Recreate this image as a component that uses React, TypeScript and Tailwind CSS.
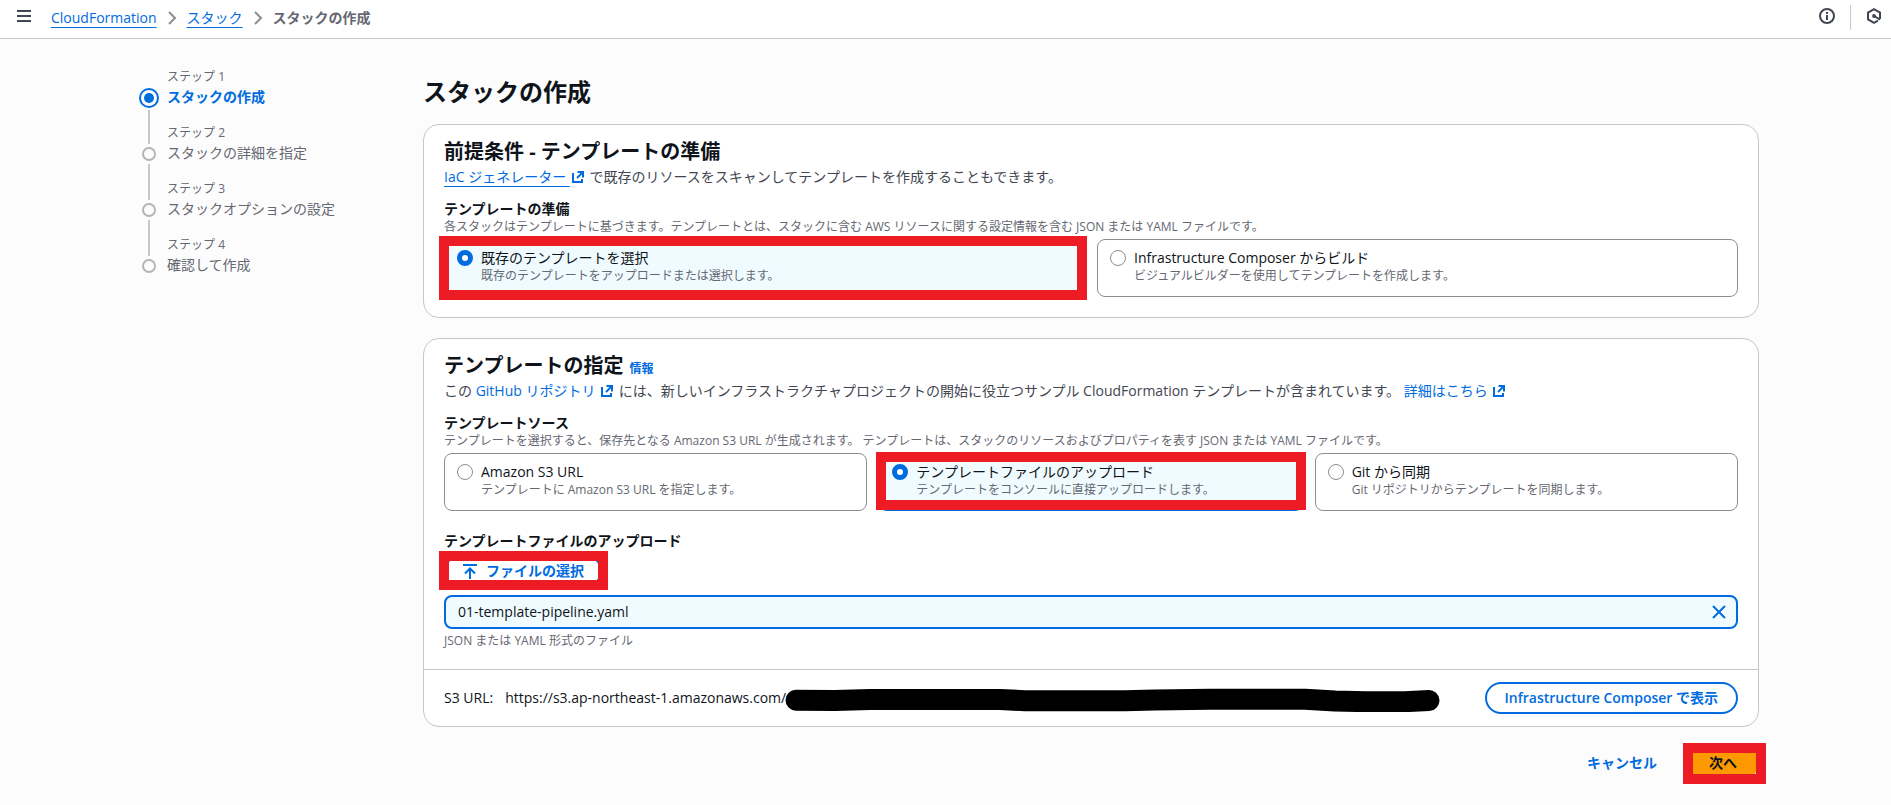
import { useState } from "react";
import type { ReactNode } from "react";

interface TileProps {
  name: string;
  value: string;
  label: string;
  description: string;
  selected: string;
  onSelect: (value: string) => void;
  children?: ReactNode;
}

const steps = [
  "スタックの作成",
  "スタックの詳細を指定",
  "スタックオプションの設定",
  "確認して作成",
];

function MenuIcon() {
  return (
    <svg viewBox="0 0 16 16" className="size-4" fill="none" stroke="currentColor" strokeWidth="2" aria-hidden="true">
      <path d="M1 3h14M1 8h14M1 13h14" />
    </svg>
  );
}

function InfoIcon() {
  return (
    <svg viewBox="0 0 16 16" className="size-4" fill="none" stroke="currentColor" strokeWidth="2" aria-hidden="true">
      <circle cx="8" cy="8" r="7" />
      <path d="M8 7v5M8 4v2" />
    </svg>
  );
}

function AssistantIcon() {
  return (
    <svg viewBox="0 0 16 16" className="size-4" fill="none" stroke="currentColor" strokeWidth="2" aria-hidden="true">
      <path d="M14 11V4.6L8 1.2 2 4.6v6.8l6 3.4 4-2.2" />
      <path d="m8 8 6 3.6" />
      <circle cx="8" cy="8" r="1.2" fill="currentColor" strokeWidth="1.4" />
    </svg>
  );
}

function ExternalIcon() {
  return (
    <svg
      viewBox="0 0 16 16"
      className="inline-block size-4 align-[-3px]"
      fill="none"
      stroke="currentColor"
      strokeWidth="2"
      aria-hidden="true"
    >
      <path d="M7.5 3H13v5.5" />
      <path d="M13 3 7 9" />
      <path d="M3 4v9h9v-3" />
    </svg>
  );
}

function UploadIcon() {
  return (
    <svg viewBox="0 0 16 16" className="size-4" fill="none" stroke="currentColor" strokeWidth="2" aria-hidden="true">
      <path d="M1 2h14" />
      <path d="M8 16V6" />
      <path d="m3 10.5 5-5 5 5" />
    </svg>
  );
}

function CloseIcon() {
  return (
    <svg viewBox="0 0 16 16" className="size-4" fill="none" stroke="currentColor" strokeWidth="2" aria-hidden="true">
      <path d="m2 2 12 12M14 2 2 14" />
    </svg>
  );
}

function Chevron() {
  return (
    <svg
      viewBox="0 0 16 16"
      className="size-4 text-[#8c8c94]"
      fill="none"
      stroke="currentColor"
      strokeWidth="2"
      aria-hidden="true"
    >
      <path d="m5 2 6 6-6 6" />
    </svg>
  );
}

function Highlight({ className }: { className: string }) {
  return (
    <span
      aria-hidden="true"
      className={`pointer-events-none absolute border-10 border-[#ed1c24] ${className}`}
    />
  );
}

function Redaction() {
  return (
    <svg viewBox="0 0 655 28" className="-ml-px h-7 w-[655px]" fill="none" aria-hidden="true">
      <path
        d="M11 16.2 50 16.4 85 15.5H215L240 16.7H340L370 16 425 15.3H520L550 17 580 17.7H620L644 16.5"
        stroke="#000"
        strokeWidth="21"
        strokeLinecap="round"
        strokeLinejoin="round"
      />
    </svg>
  );
}

function Tile({
  name,
  value,
  label,
  description,
  selected,
  onSelect,
  children,
}: TileProps) {
  const checked = selected === value;
  return (
    <div
      className={`relative min-h-[58px] flex-1 rounded-lg ${
        checked
          ? "border-2 border-[#006ce0] bg-[#f0fbff] px-[11px] py-[7px]"
          : "border border-[#8c8c94] bg-white px-3 py-2"
      }`}
    >
      <label className="flex items-start gap-2">
        <input
          type="radio"
          name={name}
          value={value}
          checked={checked}
          onChange={() => onSelect(value)}
          className={`mt-[2px] size-4 shrink-0 appearance-none rounded-full bg-white ${
            checked ? "border-5 border-[#006ce0]" : "border border-[#8c8c94]"
          }`}
        />
        <span className="flex flex-col">
          <span>{label}</span>
          <span className="text-xs text-[#656871]">{description}</span>
        </span>
      </label>
      {children}
    </div>
  );
}

function Header() {
  return (
    <header className="flex items-center justify-between border-b border-[#c6c6cd] bg-white pr-[9px] pl-4">
      <div className="flex h-[38px] items-start gap-[19px]">
        <button type="button" aria-label="メニューを開く" className="pt-2 text-[#424650]">
          <MenuIcon />
        </button>
        <nav className="flex items-center gap-[7px] pt-2" aria-label="パンくずリスト">
          <a href="#" className="text-[#006ce0] underline underline-offset-4">
            CloudFormation
          </a>
          <Chevron />
          <a href="#" className="text-[#006ce0] underline underline-offset-4">
            スタック
          </a>
          <Chevron />
          <span className="font-bold text-[#656871]">スタックの作成</span>
        </nav>
      </div>
      <div className="flex h-[38px] items-start text-[#424650]">
        <button type="button" aria-label="情報" className="pt-2">
          <InfoIcon />
        </button>
        <span className="mx-[15px] mt-[5px] h-[25px] w-px bg-[#c6c6cd]" />
        <button type="button" aria-label="アシスタント" className="pt-2">
          <AssistantIcon />
        </button>
      </div>
    </header>
  );
}

function StepNav() {
  return (
    <nav className="w-[291px] shrink-0 pt-[27px]" aria-label="手順">
      <ol>
        {steps.map((step, i) => (
          <li key={step} className="flex h-14 gap-px">
            <div className="flex w-[34px] flex-col items-center">
              <span className={`h-[22px] w-[2px] shrink-0 ${i > 0 ? "bg-[#c6c6cd]" : ""}`} />
              {i === 0 ? (
                <span className="mb-[2px] flex size-5 shrink-0 items-center justify-center rounded-full border-2 border-[#006ce0]">
                  <span className="size-[10px] rounded-full bg-[#006ce0]" />
                </span>
              ) : (
                <span className="my-[3px] size-[14px] shrink-0 rounded-full border-2 border-[#b4b4bb]" />
              )}
              {i < steps.length - 1 && <span className="w-[2px] flex-1 bg-[#c6c6cd]" />}
            </div>
            <div className="pt-px text-[#656871]">
              <div className="text-xs leading-5">ステップ {i + 1}</div>
              {i === 0 ? (
                <a href="#" aria-current="step" className="font-bold text-[#006ce0]">
                  {step}
                </a>
              ) : (
                <span>{step}</span>
              )}
            </div>
          </li>
        ))}
      </ol>
    </nav>
  );
}

export default function App() {
  const [method, setMethod] = useState("existing");
  const [source, setSource] = useState("upload");

  return (
    <div className="min-h-screen bg-[#fcfcfd] font-['Open_Sans','Noto_Sans_CJK_JP',sans-serif] text-sm leading-5 text-[#0f141a]">
      <Header />
      <div className="flex px-[132px]">
        <StepNav />
        <main className="min-w-0 flex-1 pt-[38px]">
          <h1 className="mb-[17px] text-2xl leading-[30px] font-bold">スタックの作成</h1>

          <section className="rounded-2xl border border-[#c6c6cd] bg-white px-5 pt-[15px] pb-5">
            <h2 className="text-xl leading-6 font-bold">前提条件 - テンプレートの準備</h2>
            <p className="mt-[3px] text-[#424650]">
              <a href="#" className="text-[#006ce0]">
                <span className="underline underline-offset-4">IaC ジェネレーター&nbsp;</span>
                <ExternalIcon />
              </a>{" "}
              で既存のリソースをスキャンしてテンプレートを作成することもできます。
            </p>
            <h3 className="mt-3 font-bold">テンプレートの準備</h3>
            <p className="text-xs text-[#656871]">
              各スタックはテンプレートに基づきます。テンプレートとは、スタックに含む AWS
              リソースに関する設定情報を含む JSON または YAML ファイルです。
            </p>
            <div className="mt-1 flex gap-3">
              <Tile
                name="method"
                value="existing"
                label="既存のテンプレートを選択"
                description="既存のテンプレートをアップロードまたは選択します。"
                selected={method}
                onSelect={setMethod}
              >
                <Highlight className="-inset-y-[5px] -right-1 -left-[7px]" />
              </Tile>
              <Tile
                name="method"
                value="composer"
                label="Infrastructure Composer からビルド"
                description="ビジュアルビルダーを使用してテンプレートを作成します。"
                selected={method}
                onSelect={setMethod}
              />
            </div>
          </section>

          <section className="mt-5 rounded-2xl border border-[#c6c6cd] bg-white">
            <div className="px-5 pt-[15px] pb-5">
              <div className="flex items-baseline gap-[6px]">
                <h2 className="text-xl leading-6 font-bold">テンプレートの指定</h2>
                <a href="#" className="text-xs font-bold text-[#006ce0]">
                  情報
                </a>
              </div>
              <p className="mt-[3px] text-[#424650]">
                この{" "}
                <a href="#" className="text-[#006ce0]">
                  GitHub リポジトリ <ExternalIcon />
                </a>{" "}
                には、新しいインフラストラクチャプロジェクトの開始に役立つサンプル CloudFormation
                テンプレートが含まれています。{" "}
                <a href="#" className="text-[#006ce0]">
                  詳細はこちら <ExternalIcon />
                </a>
              </p>
              <h3 className="mt-3 font-bold">テンプレートソース</h3>
              <p className="text-xs text-[#656871]">
                テンプレートを選択すると、保存先となる Amazon S3 URL が生成されます。
                テンプレートは、スタックのリソースおよびプロパティを表す JSON または YAML ファイルです。
              </p>
              <div className="mt-1 flex gap-3">
                <Tile
                  name="source"
                  value="s3"
                  label="Amazon S3 URL"
                  description="テンプレートに Amazon S3 URL を指定します。"
                  selected={source}
                  onSelect={setSource}
                />
                <Tile
                  name="source"
                  value="upload"
                  label="テンプレートファイルのアップロード"
                  description="テンプレートをコンソールに直接アップロードします。"
                  selected={source}
                  onSelect={setSource}
                >
                  <Highlight className="-inset-x-[5px] -top-[3px] -bottom-px" />
                </Tile>
                <Tile
                  name="source"
                  value="git"
                  label="Git から同期"
                  description="Git リポジトリからテンプレートを同期します。"
                  selected={source}
                  onSelect={setSource}
                />
              </div>

              <h3 className="mt-5 font-bold">テンプレートファイルのアップロード</h3>
              <div className="relative mt-1 w-fit">
                <button
                  type="button"
                  className="flex h-8 items-center gap-2 rounded-full border-2 border-[#006ce0] bg-white px-4 font-bold text-[#006ce0]"
                >
                  <UploadIcon />
                  ファイルの選択
                </button>
                <Highlight className="-top-1 -right-[6px] -bottom-[3px] -left-[5px]" />
              </div>
              <div className="mt-2 flex h-[34px] items-center justify-between rounded-lg border-2 border-[#006ce0] bg-[#f0fbff] pr-[9px] pl-3">
                <span>01-template-pipeline.yaml</span>
                <button type="button" aria-label="ファイルを削除" className="text-[#006ce0]">
                  <CloseIcon />
                </button>
              </div>
              <p className="mt-1 text-xs text-[#656871]">JSON または YAML 形式のファイル</p>
            </div>
            <div className="flex items-center justify-between border-t border-[#c6c6cd] px-5 py-3">
              <div className="flex items-center">
                <span className="mr-3">S3 URL:</span>
                <span>https://s3.ap-northeast-1.amazonaws.com/</span>
                <Redaction />
              </div>
              <button
                type="button"
                className="h-8 rounded-full border-2 border-[#006ce0] bg-white px-[18px] font-semibold text-[#006ce0]"
              >
                Infrastructure Composer で表示
              </button>
            </div>
          </section>

          <div className="mt-5 flex justify-end gap-2">
            <button type="button" className="h-8 px-[22px] font-bold text-[#006ce0]">
              キャンセル
            </button>
            <div className="relative">
              <button type="button" className="h-8 rounded-full bg-[#ff9900] px-[22px] font-bold">
                次へ
              </button>
              <Highlight className="-top-1 -right-[7px] -bottom-[5px] -left-1" />
            </div>
          </div>
        </main>
      </div>
    </div>
  );
}
